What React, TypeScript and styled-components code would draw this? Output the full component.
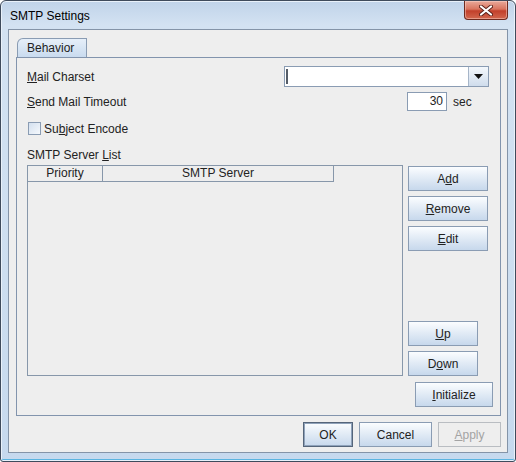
import React from 'react'
import styled, { createGlobalStyle } from 'styled-components'

const GlobalStyle = createGlobalStyle`
  html, body {
    margin: 0;
    padding: 0;
    background: #ffffff;
  }
  * {
    box-sizing: border-box;
  }
`

const Window = styled.div`
  width: 516px;
  height: 462px;
  display: flex;
  flex-direction: column;
  padding: 0 7px 8px 7px;
  border: 1px solid #3f4b5c;
  border-radius: 6px 6px 3px 3px;
  background: linear-gradient(to bottom, #c0d3e9 0px, #d3e2f2 24px, #cddef0 60%, #c6d9ee 100%);
  box-shadow: inset 0 0 0 1px #e9f1fa, inset 0 -2px 0 #5bb4e0;
  font-family: 'Liberation Sans', Arial, sans-serif;
  font-size: 12px;
  color: #222;
`

const TitleBar = styled.div`
  height: 28px;
  display: flex;
  align-items: flex-start;
  justify-content: space-between;
  padding-left: 2px;
`

const Title = styled.span`
  margin-top: 8px;
  font-size: 12px;
  color: #000;
`

const CloseButton = styled.div`
  width: 44px;
  height: 19px;
  display: flex;
  align-items: center;
  justify-content: center;
  border: 1px solid #6e2a1f;
  border-top: none;
  border-radius: 0 0 4px 4px;
  background: linear-gradient(to bottom, #e9a99a 0%, #d9755f 45%, #c2402b 55%, #d2674e 100%);
  box-shadow: inset 0 0 0 1px rgba(255, 220, 210, 0.45);
`

const Content = styled.div`
  flex: 1;
  display: flex;
  flex-direction: column;
  padding: 8px 6px 0 7px;
  border: 1px solid #8494a8;
  background: #eeeeee;
`

const TabStrip = styled.div`
  height: 19px;
  display: flex;
  padding-left: 1px;
`

const Tab = styled.div`
  width: 70px;
  height: 19px;
  padding-left: 9px;
  line-height: 18px;
  border: 1px solid #8a9cb3;
  border-bottom: none;
  border-radius: 6px 0 0 0;
  background: linear-gradient(to bottom, #e6eff9 0%, #c9dbef 100%);
  color: #222;
`

const TabBody = styled.div`
  height: 359px;
  display: flex;
  flex-direction: column;
  padding: 8px 7px 7px 10px;
  border: 1px solid #8294ad;
`

const FormRow = styled.div<{ $top: number; $height: number }>`
  height: ${p => p.$height}px;
  margin-top: ${p => p.$top}px;
  margin-right: 4px;
  display: flex;
  align-items: center;
  justify-content: space-between;
`

const Label = styled.span`
  white-space: nowrap;
`

const Mn = styled.u`
  text-decoration: underline;
  text-underline-offset: 1px;
`

const Combo = styled.div`
  width: 205px;
  height: 21px;
  display: flex;
  border: 1px solid #8a9cb3;
  background: #fff;
`

const ComboText = styled.div`
  flex: 1;
  display: flex;
  align-items: center;
  padding-left: 1px;
`

const Caret = styled.span`
  width: 2px;
  height: 15px;
  background: #555d68;
`

const ComboArrow = styled.div`
  width: 20px;
  display: flex;
  align-items: center;
  justify-content: center;
  border-left: 1px solid #a6b5c8;
  background: linear-gradient(to bottom, #f4f8fc 0%, #cfdcec 100%);
`

const FieldGroup = styled.div`
  display: flex;
  align-items: center;
  width: 82px;
`

const NumberField = styled.div`
  width: 40px;
  height: 19px;
  padding-right: 3px;
  text-align: right;
  line-height: 17px;
  border: 1px solid #8a9cb3;
  background: #fff;
`

const Unit = styled.span`
  margin-left: 6px;
`

const CheckRow = styled.div`
  height: 19px;
  margin-top: 8px;
  display: flex;
  align-items: center;
  gap: 3px;
  padding-left: 1px;
`

const CheckBox = styled.span`
  width: 13px;
  height: 13px;
  border: 1px solid #8a9cb3;
  background: linear-gradient(to bottom right, #d3e0ef 0%, #f5f8fc 100%);
`

const SectionLabel = styled.div`
  height: 16px;
  margin-top: 9px;
  line-height: 16px;
`

const ListArea = styled.div`
  height: 211px;
  margin-top: 2px;
  margin-right: 4px;
  display: flex;
  gap: 5px;
`

const Table = styled.div`
  width: 376px;
  border: 1px solid #8797aa;
  background: #eeeeee;
`

const HeaderRow = styled.div`
  display: flex;
  height: 16px;
`

const HeaderCell = styled.div<{ $width: number }>`
  width: ${p => p.$width}px;
  text-align: center;
  line-height: 15px;
  border-right: 1px solid #8797aa;
  border-bottom: 1px solid #8797aa;
`

const SideButtons = styled.div`
  flex: 1;
  display: flex;
  flex-direction: column;
  justify-content: space-between;
  padding-top: 1px;
`

const ButtonGroup = styled.div`
  display: flex;
  flex-direction: column;
  gap: 5px;
`

const Button = styled.div<{ $width: number; $default?: boolean; $disabled?: boolean }>`
  width: ${p => p.$width}px;
  height: 25px;
  display: flex;
  align-items: center;
  justify-content: center;
  border: 1px solid ${p => (p.$disabled ? '#b9bdc2' : p.$default ? '#55657a' : '#8a9cb3')};
  background: ${p =>
    p.$disabled ? '#eeeeee' : 'linear-gradient(to bottom, #fbfdff 0%, #e3ecf6 45%, #c7d8ec 100%)'};
  box-shadow: ${p => (p.$default ? 'inset 0 0 0 1px #8fa2ba' : 'none')};
  color: ${p => (p.$disabled ? '#a3a3a3' : '#222')};
`

const InitRow = styled.div`
  margin-top: 6px;
  display: flex;
  justify-content: flex-end;
`

const Footer = styled.div`
  display: flex;
  justify-content: flex-end;
  gap: 6px;
  padding-top: 6px;
`

export default function App() {
  return (
    <>
      <GlobalStyle />
      <Window>
        <TitleBar>
          <Title>SMTP Settings</Title>
          <CloseButton>
            <svg width="14" height="11" viewBox="0 0 14 11">
              <path d="M2 1.5 L12 9.5 M12 1.5 L2 9.5" stroke="#5a2018" strokeWidth="4" strokeLinecap="round" />
              <path d="M2 1.5 L12 9.5 M12 1.5 L2 9.5" stroke="#ffffff" strokeWidth="2.2" strokeLinecap="round" />
            </svg>
          </CloseButton>
        </TitleBar>
        <Content>
          <TabStrip>
            <Tab>Behavior</Tab>
          </TabStrip>
          <TabBody>
            <FormRow $top={0} $height={21}>
              <Label>
                <Mn>M</Mn>ail Charset
              </Label>
              <Combo>
                <ComboText>
                  <Caret />
                </ComboText>
                <ComboArrow>
                  <svg width="9" height="5" viewBox="0 0 9 5">
                    <path d="M0 0 H9 L4.5 5 Z" fill="#111" />
                  </svg>
                </ComboArrow>
              </Combo>
            </FormRow>
            <FormRow $top={5} $height={19}>
              <Label>
                <Mn>S</Mn>end Mail Timeout
              </Label>
              <FieldGroup>
                <NumberField>30</NumberField>
                <Unit>sec</Unit>
              </FieldGroup>
            </FormRow>
            <CheckRow>
              <CheckBox />
              <Label>
                Su<Mn>b</Mn>ject Encode
              </Label>
            </CheckRow>
            <SectionLabel>
              SMTP Server <Mn>L</Mn>ist
            </SectionLabel>
            <ListArea>
              <Table>
                <HeaderRow>
                  <HeaderCell $width={75}>Priority</HeaderCell>
                  <HeaderCell $width={231}>SMTP Server</HeaderCell>
                </HeaderRow>
              </Table>
              <SideButtons>
                <ButtonGroup>
                  <Button $width={80}>
                    A<Mn>d</Mn>d
                  </Button>
                  <Button $width={80}>
                    <Mn>R</Mn>emove
                  </Button>
                  <Button $width={80}>
                    <Mn>E</Mn>dit
                  </Button>
                </ButtonGroup>
                <ButtonGroup>
                  <Button $width={70}>
                    <Mn>U</Mn>p
                  </Button>
                  <Button $width={70}>
                    D<Mn>o</Mn>wn
                  </Button>
                </ButtonGroup>
              </SideButtons>
            </ListArea>
            <InitRow>
              <Button $width={78}>
                <Mn>I</Mn>nitialize
              </Button>
            </InitRow>
          </TabBody>
          <Footer>
            <Button $width={50} $default>
              OK
            </Button>
            <Button $width={73}>Cancel</Button>
            <Button $width={63} $disabled>
              <Mn>A</Mn>pply
            </Button>
          </Footer>
        </Content>
      </Window>
    </>
  )
}
